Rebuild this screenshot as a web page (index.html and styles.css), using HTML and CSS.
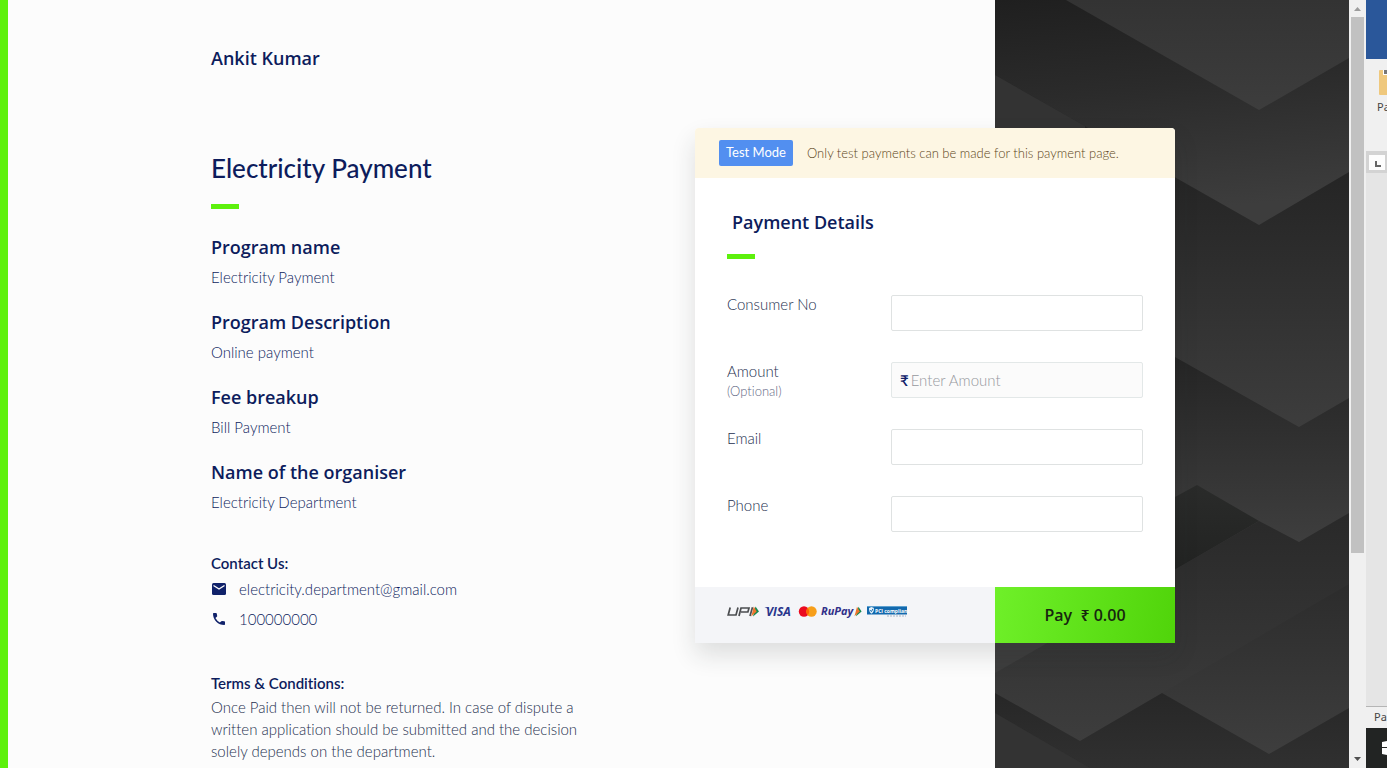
FILE: index.html
```html
<!DOCTYPE html>
<html lang="en">
<head>
<meta charset="utf-8">
<title>Electricity Payment</title>
<link rel="stylesheet" href="styles.css">
</head>
<body>
<div class="screen">
  <div class="page">
    <svg class="backdrop" viewBox="0 0 354 768" preserveAspectRatio="none" aria-hidden="true">
      <defs>
        <linearGradient id="ga" x1="0" y1="0" x2="0" y2="1"><stop offset="0" stop-color="#333"/><stop offset="1" stop-color="#3d3d3d"/></linearGradient>
        <linearGradient id="gb" gradientUnits="userSpaceOnUse" x1="0" y1="0" x2="20" y2="225"><stop offset="0" stop-color="#1f1f1f"/><stop offset=".45" stop-color="#2b2b2b"/><stop offset="1" stop-color="#3d3d3d"/></linearGradient>
        <linearGradient id="gc" gradientUnits="userSpaceOnUse" x1="0" y1="175" x2="0" y2="427"><stop offset="0" stop-color="#252525"/><stop offset="1" stop-color="#3d3d3d"/></linearGradient>
        <linearGradient id="gd" gradientUnits="userSpaceOnUse" x1="0" y1="357" x2="0" y2="542"><stop offset="0" stop-color="#252525"/><stop offset="1" stop-color="#3e3e3e"/></linearGradient>
        <linearGradient id="ge" gradientUnits="userSpaceOnUse" x1="0" y1="485" x2="0" y2="570"><stop offset="0" stop-color="#2a2b2a"/><stop offset="1" stop-color="#222322"/></linearGradient>
        <linearGradient id="gf" gradientUnits="userSpaceOnUse" x1="0" y1="513" x2="0" y2="741"><stop offset="0" stop-color="#292929"/><stop offset="1" stop-color="#3d3d3d"/></linearGradient>
        <linearGradient id="gg" gradientUnits="userSpaceOnUse" x1="0" y1="584" x2="0" y2="754"><stop offset="0" stop-color="#2c2c2c"/><stop offset="1" stop-color="#3e3e3e"/></linearGradient>
        <linearGradient id="gh" gradientUnits="userSpaceOnUse" x1="0" y1="693" x2="0" y2="768"><stop offset="0" stop-color="#272727"/><stop offset="1" stop-color="#303030"/></linearGradient>
      </defs>
      <rect width="354" height="768" fill="url(#gc)"/>
      <path fill="url(#gb)" d="M0 0H354V172L264 225L0 75Z"/>
      <path fill="#333" d="M0 75L90 126V140H0Z"/>
      <path fill="url(#ga)" d="M71 0H354V58L264 110Z"/>
      <path fill="url(#gd)" d="M0 255L180 357L304 427L354 398V560H0Z"/>
      <path fill="url(#ge)" d="M180 497L202 485L264 521L180 570Z"/>
      <path fill="url(#gf)" d="M0 673L264 521L304 542L354 513V768H0Z"/>
      <path fill="url(#gg)" d="M167 693L354 584V708L274 754Z"/>
      <path fill="url(#gh)" d="M0 693L85 741L167 693L274 754L354 708V768H0Z"/>
      <path fill="#333" d="M0 713L95 768H0Z"/>
    </svg>
    <main class="content">
      <section class="info">
        <p class="merchant">Ankit Kumar</p>
        <h1 class="title">Electricity Payment</h1>
        <div class="details">
          <h2>Program name</h2>
          <p>Electricity Payment</p>
          <h2>Program Description</h2>
          <p>Online payment</p>
          <h2>Fee breakup</h2>
          <p>Bill Payment</p>
          <h2>Name of the organiser</h2>
          <p>Electricity Department</p>
        </div>
        <div class="contact">
          <h3>Contact Us:</h3>
          <a href="mailto:electricity.department@gmail.com"><svg width="16" height="16" viewBox="0 0 16 16" aria-hidden="true"><rect x="1" y="2" width="14" height="12" rx="1.5" fill="#10226a"/><path d="M2.5 4.5L8 8L13.5 4.5" fill="none" stroke="#fcfcfc" stroke-width="1.4"/></svg>electricity.department@gmail.com</a>
          <a href="tel:100000000"><svg width="16" height="16" viewBox="0 0 16 16" aria-hidden="true"><path fill="#10226a" d="M2.7 2H5Q5.7 2 5.8 2.7L6.2 5Q6.2 5.5 5.8 5.8L4.4 7.1Q6 10 8.9 11.6L10.3 10.2Q10.7 9.8 11.2 9.9L13.3 10.3Q14 10.5 14 11.1V13.3Q14 14 13.3 14Q8.6 13.9 5.3 10.7Q2.1 7.4 2 2.7Q2 2 2.7 2Z"/></svg>100000000</a>
        </div>
        <div class="terms">
          <h3>Terms &amp; Conditions:</h3>
          <p>Once Paid then will not be returned. In case of dispute a written application should be submitted and the decision solely depends on the department.</p>
        </div>
      </section>
      <form class="card">
        <div class="notice"><span class="badge">Test Mode</span><span>Only test payments can be made for this payment page.</span></div>
        <div class="fields">
          <h2 class="form-title">Payment Details</h2>
          <div class="row"><label for="consumer">Consumer No</label><input id="consumer" type="text"></div>
          <div class="row"><label for="amount">Amount<small>(Optional)</small></label><span class="amount"><span class="rupee">₹</span><input id="amount" type="text" placeholder="Enter Amount"></span></div>
          <div class="row"><label for="email">Email</label><input id="email" type="email"></div>
          <div class="row"><label for="phone">Phone</label><input id="phone" type="tel"></div>
        </div>
        <div class="footer">
          <svg class="brands" width="182" height="14" viewBox="0 -1 182 14" role="img" aria-label="UPI, Visa, Mastercard, RuPay, PCI compliant">
            <g fill="none" stroke="#4b4d50" stroke-width="1.7"><path d="M3.2 1.5L1.2 9H9L11 1.5"/><path d="M12 10L14 2H22L20.9 6H14"/><path d="M25.5 1.2L23 10"/></g>
            <path fill="#138a50" d="M28.5 .5L32 5.5L26 10.5Z"/><path fill="#ed752e" d="M26.8 .5L29.7 5.5L24.2 10.5Z"/>
            <text class="visa" x="39" y="10">VISA</text><path fill="#29358c" d="M37.5 1.2H41L42.5 4.5Q40.5 2.1 37.5 1.2Z"/>
            <circle cx="77" cy="5.5" r="5.2" fill="#eb0b20"/><circle cx="84.5" cy="5.5" r="5.2" fill="#f79f1a"/><path fill="#ff6500" d="M80.75 1.9A5.2 5.2 0 0 1 80.75 9.1A5.2 5.2 0 0 1 80.75 1.9Z"/>
            <text class="rupay" x="94" y="9">RuPay</text>
            <path fill="#138a50" d="M131.5 .8L134.6 5.5L129 10.3Z"/><path fill="#ed752e" d="M130 .8L132.8 5.5L127.5 10.3Z"/>
            <rect x="140" y="1" width="40" height="7.5" fill="#1269ae"/><rect x="140" y="0" width="40" height="1" fill="#5da0cf"/><path fill="#e4f1fa" d="M142 2L144.5 1L147 2Q147.2 6 144.5 7.8Q141.8 6 142 2Z"/><path d="M143.2 4.2L144.4 5.6L146 2.8" fill="none" stroke="#1269ae"/>
            <text class="pci" x="148" y="7">PCI compliant</text><path d="M160 10H179" stroke="#a6b4c5" stroke-width="1" stroke-dasharray="2 1"/>
          </svg>
          <button class="pay" type="button">Pay &nbsp;₹ 0.00</button>
        </div>
      </form>
    </main>
  </div>
  <div class="scrollbar" aria-hidden="true">
    <svg width="17" height="17" viewBox="0 0 17 17"><path fill="#9c9c9c" d="M5 11L8.5 7L12 11Z"/></svg>
    <div class="track"><div class="thumb"></div></div>
    <svg width="17" height="17" viewBox="0 0 17 17"><path fill="#505050" d="M5 6H12L8.5 10Z"/></svg>
  </div>
  <aside class="editor">
    <div class="titlebar"></div>
    <div class="ribbon">
      <svg width="8" height="25" viewBox="0 0 8 25" aria-hidden="true"><rect width="10" height="25" rx="1" fill="#efc87d"/><path fill="#fff" d="M4 0H8V5H4Z"/><path fill="#777" d="M5 0H8V4H5Z"/></svg>
      <span>Pa</span>
    </div>
    <div class="ruler"><svg width="16" height="15" viewBox="0 0 16 15" aria-hidden="true"><rect width="16" height="15" fill="#fdfdfd"/><path fill="none" stroke="#666" stroke-width="2" d="M7 6V11H12"/></svg></div>
    <div class="canvas"></div>
    <div class="status">Pa</div>
    <div class="taskbar"><svg width="5" height="14" viewBox="0 0 5 14" aria-hidden="true"><path fill="#fff" d="M0 1L5 0V6H0ZM0 7H5V14L0 13Z"/></svg></div>
  </aside>
</div>
</body>
</html>
```
FILE: styles.css
```css
* { box-sizing: border-box; }
body {
  margin: 0;
  font-family: Lato, "Noto Sans", sans-serif;
  font-size: 15px;
  font-weight: 300;
  font-variant-ligatures: none;
  color: #0d1c5c;
}
h1, h2, h3, p { margin: 0; }
.screen { display: flex; height: 100vh; overflow: hidden; }

.page {
  position: relative;
  flex: 1;
  min-width: 0;
  overflow: hidden;
  border-left: 8px solid #5df10c;
  background: #fcfcfc;
}
.backdrop { position: absolute; top: 0; right: 0; width: 354px; height: 100%; }
.content {
  position: relative;
  display: flex;
  justify-content: space-between;
  align-items: flex-start;
  gap: 32px;
  padding: 0 174px 0 203px;
}

.info { flex: 0 1 376px; }
.merchant, .details h2, .form-title {
  font-family: "Open Sans", "Noto Sans", sans-serif;
  font-size: 18px;
  line-height: 24px;
  font-weight: 600;
}
.merchant { padding-top: 46px; }
.title { padding-top: 82px; font-size: 26px; line-height: 32px; font-weight: 500; }
.title::after, .form-title::after {
  content: "";
  display: block;
  width: 28px;
  height: 5px;
  background: #5df10c;
}
.title::after { margin-top: 20px; }
.details { padding-top: 26px; }
.details p { padding: 7px 0 22px; line-height: 22px; }
.contact { padding-top: 17px; display: flex; flex-direction: column; }
h3 { font-size: 15px; line-height: 22px; font-weight: 600; }
.contact a {
  display: flex;
  align-items: center;
  gap: 12px;
  height: 30px;
  color: inherit;
  text-decoration: none;
}
.terms { padding-top: 38px; }
.terms p { padding-top: 2px; line-height: 22px; color: #25304f; }

.card {
  flex: 0 1 480px;
  margin-top: 128px;
  border-radius: 4px;
  background: #fff;
  box-shadow: 0 12px 24px rgba(35, 45, 45, 0.14);
}
.notice {
  display: flex;
  align-items: center;
  gap: 14px;
  height: 50px;
  padding: 0 24px;
  border-radius: 4px 4px 0 0;
  background: #fdf6e3;
  color: #5c4520;
  font-size: 13px;
}
.badge {
  padding: 0 7px;
  border-radius: 2px;
  background: #528ff0;
  color: #fff;
  font-weight: 400;
  line-height: 24px;
  padding-bottom: 2px;
}
.fields { padding: 32px 32px 24px; }
.form-title { margin-bottom: 36px; text-indent: 5px; }
.form-title::after { margin-top: 20px; }
.row {
  display: grid;
  grid-template-columns: 164px 1fr;
  align-items: start;
  height: 36px;
  margin-bottom: 31px;
  color: #25304f;
}
.row label { line-height: 18px; }
.row label small { display: block; font-size: 13px; line-height: 22px; color: #5f6884; }
.row input {
  width: 100%;
  height: 36px;
  padding: 0 8px;
  border: 1px solid #dfe2e2;
  border-radius: 2px;
  background: #fff;
  font: inherit;
}
.amount {
  display: flex;
  align-items: center;
  height: 36px;
  padding-left: 8px;
  border: 1px solid #e3e8e8;
  border-radius: 2px;
  background: #fbfbfb;
}
.row .amount input { height: 34px; padding: 0 2px; border: 0; background: transparent; }
.rupee { color: #10226a; font-weight: 600; }
input::placeholder { color: #96989e; opacity: 1; }
.footer { display: flex; height: 56px; background: #f4f5f8; }
.brands { margin: 18px auto 0 32px; overflow: visible; }
.visa { font: italic bold 12px "Open Sans", sans-serif; fill: #29358c; }
.rupay { font: italic bold 11px "Open Sans", sans-serif; fill: #302f88; }
.pci { font: bold 5px "Open Sans", sans-serif; fill: #fff; }
.pay {
  width: 180px;
  padding: 0;
  border: 0;
  background: linear-gradient(100deg, #6ff029, #50d40a);
  color: #17260f;
  font: 600 16px "Open Sans", "Noto Sans", sans-serif;
}

.scrollbar { display: flex; flex-direction: column; flex: 0 0 17px; background: #f0f0f0; }
.track { flex: 1; }
.thumb { width: 13px; height: 73%; margin-left: 2px; background: #c1c1c1; }

.editor {
  display: flex;
  flex-direction: column;
  flex: 0 0 21px;
  overflow: hidden;
  background: #f0f0f0;
  color: #444;
  font: 11px "Noto Sans", sans-serif;
}
.titlebar { height: 59px; background: #2a579a; }
.ribbon { display: flex; flex-direction: column; height: 92px; padding-top: 11px; }
.ribbon svg { margin-left: 13px; }
.ribbon span { margin-left: 11px; line-height: 24px; }
.ruler { height: 22px; padding: 4px 3px; background: #d3d3d3; }
.ruler svg { display: block; }
.canvas { flex: 1; background: #e5e5e5; border-bottom: 1px solid #b5b5b5; }
.status { height: 21px; padding-left: 8px; line-height: 19px; }
.taskbar { display: flex; align-items: center; justify-content: flex-end; height: 40px; background: #222423; }
```
